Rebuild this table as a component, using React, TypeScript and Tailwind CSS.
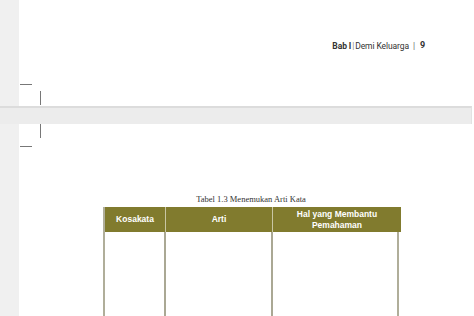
export default function App() {
  return (
    <div className="w-[474px] h-[316px] overflow-hidden bg-white flex flex-col" style={{ fontFamily: '"Liberation Sans", Arial, sans-serif' }}>
      {/* halaman atas */}
      <div className="flex h-[106px] shrink-0">
        <div className="w-[19px] bg-[#f0f0f0] shrink-0" />
        <div className="flex-1 flex flex-col">
          <div className="flex justify-end items-center pr-[49px] pt-[40px] h-[52px] text-[8.5px] text-[#333] tracking-[-0.1px]" style={{ fontFamily: 'Roboto, "Liberation Sans", sans-serif' }}>
            <span className="font-bold">Bab I</span>
            <span className="ml-[1px] text-[#888]">|</span>
            <span className="ml-[1px]">Demi Keluarga</span>
            <span className="ml-[4px] text-[#666]">|</span>
            <span className="ml-[5px] font-bold text-[9px]">9</span>
          </div>
          <div className="mt-[32px] ml-[1px] w-[12px] h-px bg-[#777]" />
          <div className="mt-[6px] ml-[21px] w-px h-[14px] bg-[#777]" />
        </div>
      </div>

      {/* pemisah halaman */}
      <div className="h-[18px] shrink-0 flex">
        <div className="flex-1 max-w-[472px] bg-[#ececec] border-t-2 border-[#dcdcdc] border-r border-r-[#e2e2e2]" />
      </div>

      {/* halaman bawah */}
      <div className="flex flex-1">
        <div className="w-[19px] bg-[#f0f0f0] shrink-0" />
        <div className="flex-1 flex flex-col">
          <div className="ml-[21px] w-px h-[14px] bg-[#777]" />
          <div className="mt-[8px] ml-[1px] w-[12px] h-px bg-[#777]" />
          <div className="mt-[47px] pl-[84px] w-[296px] box-content">
            <div className="text-center text-[8.5px] leading-[10px] text-[#333]" style={{ fontFamily: '"Liberation Serif", "Times New Roman", serif' }}>
              Tabel 1.3 Menemukan Arti Kata
            </div>
            <div className="mt-[3px] grid grid-cols-[61px_107px_128px] border-x-2 border-[#b0ae9a]">
              <div className="bg-[#817b2e] h-[25px] flex items-center justify-center text-white font-bold text-[8.5px] border-r border-[#c9c6a4]">Kosakata</div>
              <div className="bg-[#817b2e] h-[25px] flex items-center justify-center text-white font-bold text-[8.5px] border-r border-[#c9c6a4]">Arti</div>
              <div className="bg-[#817b2e] h-[25px] flex items-center justify-center text-center text-white font-bold text-[8.5px] leading-[11px]">Hal yang Membantu<br />Pemahaman</div>
              <div className="h-[90px] border-r-2 border-[#aaa894]" />
              <div className="h-[90px] border-r-2 border-[#aaa894]" />
              <div className="h-[90px]" />
            </div>
          </div>
        </div>
      </div>
    </div>
  );
}
